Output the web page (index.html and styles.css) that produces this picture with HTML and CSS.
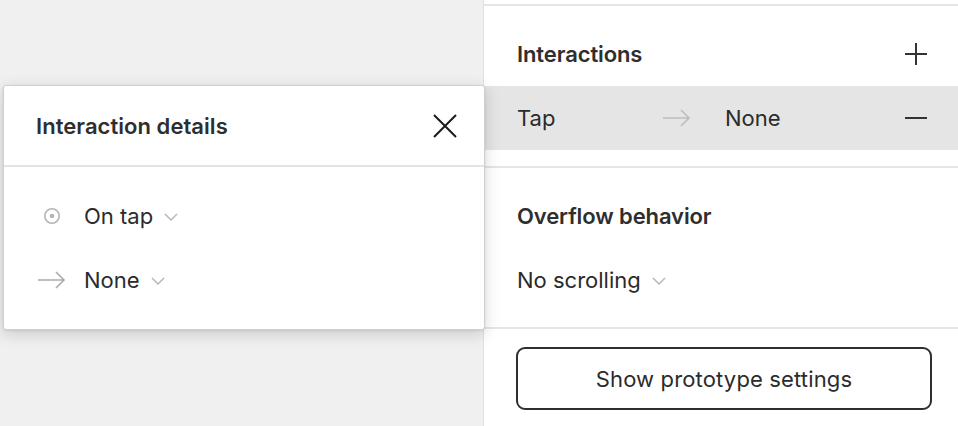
FILE: index.html
```html
<!DOCTYPE html>
<html>
<head>
<meta charset="utf-8">
<link rel="stylesheet" href="styles.css">
</head>
<body>
<div class="app">
  <div class="canvas">
    <div class="popup">
      <div class="popup-head">
        <span class="popup-title">Interaction details</span>
        <svg class="close" width="24" height="24" viewBox="0 0 24 24"><path d="M1 1 L23 23 M23 1 L1 23" stroke="#1a1a1a" stroke-width="2" fill="none"/></svg>
      </div>
      <div class="popup-body">
        <div class="prow">
          <span class="picon">
            <svg width="18" height="18" viewBox="0 0 18 18"><circle cx="9" cy="9" r="7.2" stroke="#b5b5b5" stroke-width="1.6" fill="none"/><circle cx="9" cy="9" r="2.3" fill="#b5b5b5"/></svg>
          </span>
          <span class="ptext">On tap</span>
          <svg class="chev" width="14" height="8" viewBox="0 0 14 8"><path d="M1 1 L7 7 L13 1" stroke="#b3b3b3" stroke-width="1.4" fill="none"/></svg>
        </div>
        <div class="prow">
          <span class="picon">
            <svg width="28" height="18" viewBox="0 0 28 18"><path d="M0 9 H26 M18 1 L26 9 L18 17" stroke="#aaaaaa" stroke-width="1.6" fill="none"/></svg>
          </span>
          <span class="ptext">None</span>
          <svg class="chev" width="14" height="8" viewBox="0 0 14 8"><path d="M1 1 L7 7 L13 1" stroke="#b3b3b3" stroke-width="1.4" fill="none"/></svg>
        </div>
      </div>
    </div>
  </div>
  <div class="panel">
    <div class="top-gap"></div>
    <div class="section interactions">
      <div class="sec-head">
        <span class="sec-title">Interactions</span>
        <svg class="pm" width="24" height="24" viewBox="0 0 24 24"><path d="M1 12 H23 M12 1 V23" stroke="#333" stroke-width="2" fill="none"/></svg>
      </div>
      <div class="irow">
        <span class="itext">Tap</span>
        <svg width="28" height="18" viewBox="0 0 28 18"><path d="M0 9 H26 M18 1 L26 9 L18 17" stroke="#bdbdbd" stroke-width="1.6" fill="none"/></svg>
        <span class="itext">None</span>
        <svg class="pm" width="24" height="24" viewBox="0 0 24 24"><path d="M1 12 H23" stroke="#333" stroke-width="2" fill="none"/></svg>
      </div>
    </div>
    <div class="section overflow">
      <div class="sec-title">Overflow behavior</div>
      <div class="select">
        <span class="itext">No scrolling</span>
        <svg class="chev" width="14" height="8" viewBox="0 0 14 8"><path d="M1 1 L7 7 L13 1" stroke="#b3b3b3" stroke-width="1.4" fill="none"/></svg>
      </div>
    </div>
    <div class="btn-wrap">
      <button class="btn">Show prototype settings</button>
    </div>
  </div>
</div>
</body>
</html>
```

FILE: styles.css
```css
* { box-sizing: border-box; }
html, body { margin: 0; padding: 0; }
body {
  font-family: Inter, "Noto Sans", sans-serif;
  color: #333;
  background: #f0f0f0;
  width: 958px;
  height: 426px;
  overflow: hidden;
}
.app {
  display: flex;
  height: 426px;
}
.canvas {
  position: relative;
  width: 483px;
  flex: none;
  background: #f0f0f0;
  z-index: 2;
}
.popup {
  position: absolute;
  left: 3px;
  top: 85px;
  width: 482px;
  height: 245px;
  background: #fff;
  border: 1px solid #cfcfcf;
  border-radius: 3px;
  box-shadow: 0 4px 16px rgba(0,0,0,0.16), 0 1px 3px rgba(0,0,0,0.08);
}
.popup-head {
  height: 81px;
  border-bottom: 2px solid #e3e3e3;
  display: flex;
  align-items: center;
  justify-content: space-between;
  padding: 0 27px 0 32px;
}
.popup-title {
  font-size: 22px;
  font-weight: 600;
  color: #2e2e2e;
  letter-spacing: 0.05px;
}
.popup-body {
  padding-top: 33px;
  display: flex;
  flex-direction: column;
  gap: 32px;
}
.prow {
  display: flex;
  align-items: center;
  height: 32px;
  padding-left: 34px;
}
.picon {
  width: 46px;
  display: flex;
  align-items: center;
}
.prow:first-child .picon { padding-left: 5px; }
.ptext {
  font-size: 22px;
  color: #2b2b2b;
}
.chev {
  margin-left: 11px;
  margin-top: 2px;
}
.panel {
  flex: 1;
  background: #fff;
  border-left: 1px solid #e0e0e0;
}
.top-gap {
  height: 6px;
  border-bottom: 2px solid #e6e6e6;
}
.section {
  border-bottom: 2px solid #e6e6e6;
}
.interactions {
  padding: 32px 0 16px;
}
.sec-head {
  display: flex;
  align-items: center;
  justify-content: space-between;
  height: 32px;
  padding: 0 30px 0 33px;
  margin-bottom: 16px;
}
.sec-title {
  font-size: 22px;
  font-weight: 600;
  color: #2e2e2e;
  letter-spacing: -0.1px;
  line-height: 32px;
}
.irow {
  display: grid;
  grid-template-columns: 146px 62px 1fr 24px;
  align-items: center;
  height: 64px;
  background: #e5e5e5;
  padding: 0 30px 0 33px;
}
.itext {
  font-size: 22px;
  color: #2b2b2b;
}
.overflow {
  padding: 32px 33px 31px;
  display: flex;
  flex-direction: column;
  gap: 32px;
}
.select {
  display: flex;
  align-items: center;
  height: 32px;
}
.btn-wrap {
  padding: 18px 26px 0 32px;
}
.btn {
  display: block;
  width: 100%;
  height: 63px;
  border: 2px solid #2f2f2f;
  border-radius: 9px;
  background: #fff;
  font-family: Inter, "Noto Sans", sans-serif;
  font-size: 22px;
  letter-spacing: 0.15px;
  color: #2b2b2b;
  padding: 0;
}
```
